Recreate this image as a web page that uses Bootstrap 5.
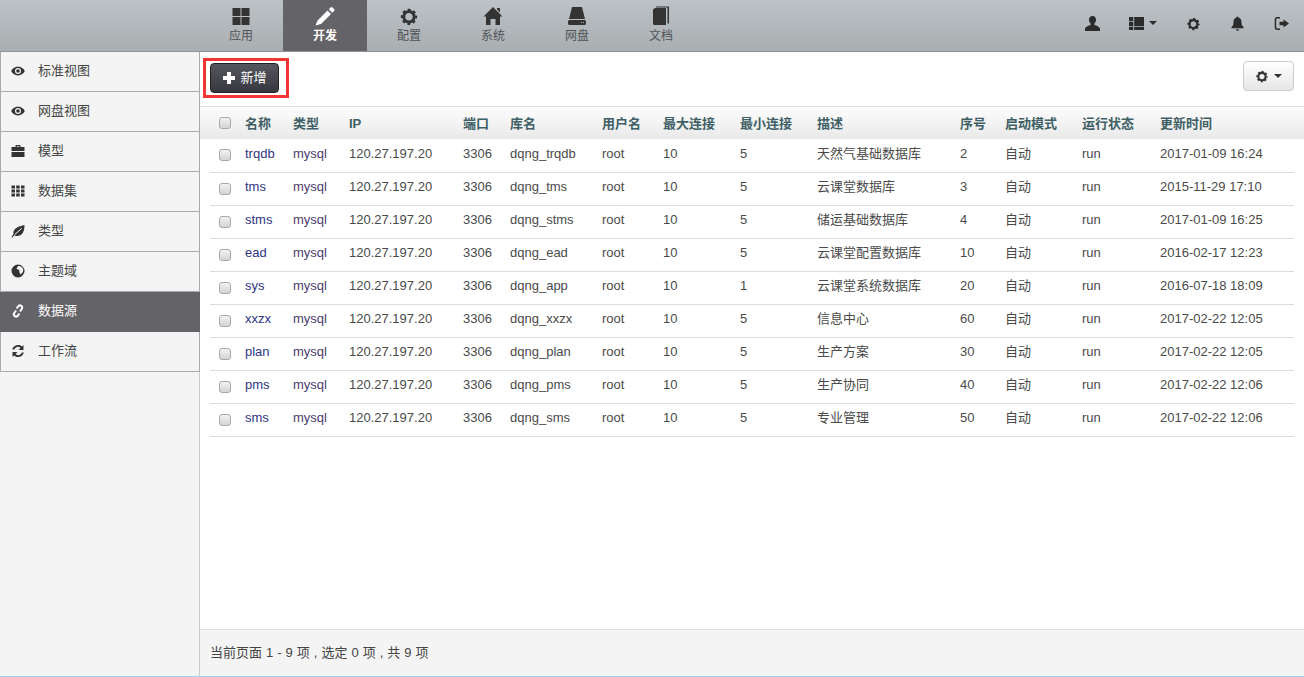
<!DOCTYPE html>
<html lang="en">
<head>
  <meta charset="UTF-8" />
  <title>数据源</title>
  <link href="https://cdn.jsdelivr.net/npm/bootstrap@5.3.2/dist/css/bootstrap.min.css" rel="stylesheet">
  <style>
    html, body { height: 100%; }
    body {
      font-family: "Liberation Sans", "Noto Sans CJK SC", sans-serif;
      font-size: 13px;
      color: #333;
      background: #fff;
      overflow: hidden;
    }
    .page { height: 677px; }
    .ico { width: 14px; height: 14px; fill: currentColor; flex: none; }

    /* top bar */
    .topbar {
      height: 52px;
      padding-left: 199px;
      background: linear-gradient(#bcc2c6, #a9aeb1);
      border-bottom: 1px solid #8f9295;
    }
    .app-tab {
      width: 84px;
      height: 51px;
      color: #505356;
      font-size: 12px;
      line-height: 14px;
      text-decoration: none;
      padding-top: 6px;
    }
    .app-tab .ico { width: 20px; height: 20px; color: #333; margin-bottom: 3px; }
    .app-tab.on { background: #646367; color: #fff; font-weight: bold; }
    .app-tab.on .ico { color: #fff; }
    .tool-set { gap: 29px; padding: 0 15px 5px 0; color: #2b2b2b; }
    .tool-set .ico { width: 15px; height: 15px; }
    .caret-down {
      border-top: 4px solid currentColor;
      border-left: 4px solid transparent;
      border-right: 4px solid transparent;
      width: 0; height: 0;
      margin-left: 5px;
    }

    /* side menu */
    .sidemenu {
      width: 200px;
      background: #f4f4f4;
      box-shadow: inset -1px 0 #ccc;
    }
    .side-item {
      height: 40px;
      padding: 0 0 1px 10px;
      color: #444;
      text-decoration: none;
      background: #f4f4f4;
      border-left: 1px solid #aaa;
      border-right: 1px solid #aaa;
      border-bottom: 1px solid #aaa;
      gap: 13px;
    }
    .side-item .ico { color: #333; }
    .side-item.on { background: #646367; color: #fff; border-color: #646367; }
    .side-item.on .ico { color: #fff; }

    /* toolbar */
    .toolrow { height: 54px; padding: 6px 10px 0; }
    .mark-box { border: 3px solid #f33434; padding: 2px 7px 2px 4px; margin-left: -7px; height: 40px; }
    .btn-add {
      width: 69px; height: 30px;
      padding: 0;
      font-size: 13px;
      color: #fff;
      border: 1px solid #222;
      border-radius: 4px;
      background: linear-gradient(#56565e, #37373f);
      gap: 4px;
    }
    .btn-add:hover { color: #fff; }
    .btn-tool {
      width: 51px; height: 30px;
      margin-top: 3px;
      padding: 0;
      color: #333;
      border: 1px solid #ccc;
      border-radius: 4px;
      background: linear-gradient(#fff, #e6e6e6);
    }

    /* table */
    .grid-wrap {
      padding: 0 10px;
      border-top: 1px solid #ddd;
      background: linear-gradient(#fdfdfd, #e9e9e9) top / 100% 32px no-repeat;
    }
    .data-grid { table-layout: fixed; width: 1084px; margin: 0; color: #4a4a4a; --bs-table-bg: transparent; }
    .data-grid th, .data-grid td {
      padding: 0 0 3px;
      border-bottom: 1px solid #ddd;
      vertical-align: middle;
      white-space: nowrap;
      box-shadow: none;
    }
    .data-grid th { height: 32px; padding: 1px 0 0; color: #3f5f66; font-weight: bold; border-bottom: 0; }
    .data-grid td { height: 33px; }
    .data-grid th:nth-child(1) { width: 35px; padding: 0 0 0 9px; }
    .data-grid td:nth-child(1) { padding: 0 0 0 9px; }
    .data-grid th:nth-child(2) { width: 48px; }
    .data-grid th:nth-child(3) { width: 56px; }
    .data-grid th:nth-child(4) { width: 114px; }
    .data-grid th:nth-child(5) { width: 47px; }
    .data-grid th:nth-child(6) { width: 92px; }
    .data-grid th:nth-child(7) { width: 61px; }
    .data-grid th:nth-child(8) { width: 77px; }
    .data-grid th:nth-child(9) { width: 77px; }
    .data-grid th:nth-child(10) { width: 143px; }
    .data-grid th:nth-child(11) { width: 45px; }
    .data-grid th:nth-child(12) { width: 77px; }
    .data-grid th:nth-child(13) { width: 78px; }
    .data-grid a { color: #2f3583; text-decoration: none; }
    .data-grid .db-type { color: #4c3b6e; }
    .chk {
      display: block;
      width: 12px; height: 12px;
      margin: 0;
      appearance: none;
      border: 1px solid #a9a9a9;
      border-radius: 3px;
      background: linear-gradient(#f2f2f2, #d4d4d4);
    }

    /* footer */
    .grid-foot {
      height: 47px;
      padding-left: 10px;
      background: #f4f4f4;
      border-top: 1px solid #ddd;
      color: #444;
      word-spacing: .4px;
    }
    .bottom-line { height: 1px; background: #9dd3f2; }
  </style>
</head>
<body>

  <!-- ICONS -->
  <svg width="0" height="0" class="position-absolute">
    <symbol id="i-th" viewBox="0 0 20 20"><path d="M1.500 2h8v8h-8zM10.500 2h8v8h-8zM1.500 11h8v8h-8zM10.500 11h8v8h-8z"/></symbol>
    <symbol id="i-pencil" viewBox="0 0 20 20"><path d="M12.500 4.500L16 8 6 18l-5.500 1.500L2.500 14.500zM13.800 3.200L15.500 1.500a1.400 1.400 0 0 1 2 0l1.500 1.500a1.400 1.400 0 0 1 0 2L17.300 6.700z"/></symbol>
    <symbol id="i-cog" viewBox="-2 -3 24 24"><circle cx="10" cy="10" r="6.300" fill="none" stroke="currentColor" stroke-width="3.600"/><circle cx="10" cy="10" r="8.300" fill="none" stroke="currentColor" stroke-width="3" stroke-dasharray="3.400 3.118" stroke-dashoffset="1.700"/></symbol>
    <symbol id="i-home" viewBox="0 0 20 20"><path d="M10 1l9.500 9.500H17V19h-4.500v-6h-5v6H3v-8.500H.5zM14 2h3v4.500l-3-3z"/></symbol>
    <symbol id="i-hdd" viewBox="0 0 20 20"><path fill-rule="evenodd" d="M5 1h10l3 12H2zM2.500 14h15a1.500 1.500 0 0 1 1.500 1.500v2a1.500 1.500 0 0 1-1.500 1.500h-15A1.500 1.500 0 0 1 1 17.500v-2A1.500 1.500 0 0 1 2.500 14zM14 16v1h1v-1zm2 0v1h1v-1z"/></symbol>
    <symbol id="i-book" viewBox="0 0 20 20"><path d="M2 3.500L4 2h11v17H3.500A1.500 1.500 0 0 1 2 17.500zM5 .5h13v17h-1.500V1.500H5z"/></symbol>
    <symbol id="i-user" viewBox="0 0 15 15"><path d="M7.500 0c2.200 0 3.500 1.700 3.500 3.800 0 1.500-.7 3-1.600 3.800V9c2 .8 5.600 1.600 5.600 4v2H0v-2c0-2.400 3.600-3.200 5.600-4V7.600C4.700 6.800 4 5.300 4 3.800 4 1.700 5.300 0 7.500 0z"/></symbol>
    <symbol id="i-layout" viewBox="0 0 15 15"><path d="M0 1h4.300v4H0zM0 5.800h4.300V10H0zM0 10.800h4.300V14H0zM5.200 1H15v9H5.200zM5.200 10.800H15V14H5.200z"/></symbol>
    <symbol id="i-bell" viewBox="0 0 15 15"><path d="M7.500 .5a1 1 0 0 1 1 1c2.300.5 3 2.400 3 5 0 2.500 1 3.700 2 4.500v1.300h-12V11c1-.8 2-2 2-4.500 0-2.600.7-4.500 3-5a1 1 0 0 1 1-1zM6 13.200h3a1.500 1.500 0 0 1-3 0z"/></symbol>
    <symbol id="i-out" viewBox="0 0 15 15"><path d="M6 1v1.400H3.500A1.300 1.300 0 0 0 2.200 3.700v7.600a1.300 1.300 0 0 0 1.300 1.300H6V14H3.300A2.700 2.700 0 0 1 .700 11.300V3.700A2.700 2.700 0 0 1 3.300 1zM9.500 3.500L15 7.500l-5.500 4V9.300h-4V5.700h4z"/></symbol>
    <symbol id="i-eye" viewBox="0 0 14 14"><path fill-rule="evenodd" d="M7 2.500c3.300 0 5.700 2.300 6.800 4.500C12.700 9.200 10.300 11.500 7 11.500S1.300 9.200.2 7C1.300 4.800 3.700 2.500 7 2.500zM7 4a3 3 0 1 0 0 6 3 3 0 0 0 0-6zm0 1.200a1.800 1.800 0 1 1 0 3.600 1.800 1.800 0 0 1 0-3.600z"/></symbol>
    <symbol id="i-case" viewBox="0 0 14 14"><path fill-rule="evenodd" d="M4.500 3V1.800c0-.5.300-.8.800-.8h3.400c.5 0 .8.300.8.800V3H13.500v4H.5V3zm1.300-.7V3h2.400v-.7zM.5 8h13v5H.5z"/></symbol>
    <symbol id="i-grid" viewBox="0 0 14 14"><path d="M.5 1.500h3.500v3H.5zM5.200 1.500h3.500v3H5.200zM10 1.500h3.500v3H10zM.5 5.500h3.500v3H.5zM5.200 5.500h3.500v3H5.200zM10 5.500h3.500v3H10zM.5 9.500h3.500v3H.5zM5.200 9.500h3.500v3H5.200zM10 9.500h3.500v3H10z"/></symbol>
    <symbol id="i-leaf" viewBox="0 0 14 14"><path fill-rule="evenodd" d="M13.500 1C13.500 8 11 12 6 12c-1.200 0-2.200-.3-2.800-.8L1.500 13.500l-1-.5 2-3C1.800 6 5 2.500 13.500 1zM10.500 4L3.500 10.300l.7.500L11 4.500z"/></symbol>
    <symbol id="i-globe" viewBox="0 0 14 14"><path fill-rule="evenodd" d="M7 .5a6.500 6.500 0 1 1 0 13 6.500 6.500 0 0 1 0-13zM7 2c-.7.700-.5 1.500-1.300 2-.5.800.5 1.300 1.300 1.500.8 0 1.500.6 1.300 1.500-.2 1 .6 1.500 1 3.500 1.500-.5 3-2.500 3-4.500 0-2-2-4.700-5.300-4z"/></symbol>
    <symbol id="i-link" viewBox="0 0 14 14"><path fill="none" stroke="currentColor" stroke-width="2" d="M5.500 4.500L7.500 2a2.200 2.200 0 0 1 3.500 2.500L9 7.500M8.500 9.500L6.500 12A2.200 2.200 0 0 1 3 9.500L5 6.500"/></symbol>
    <symbol id="i-sync" viewBox="0 0 14 14"><path d="M12.500 1v5H7.500l2-2a3.800 3.800 0 0 0-6.300 1.500H1.200A6 6 0 0 1 11 2.500zM1.500 13V8h5l-2 2a3.800 3.800 0 0 0 6.300-1.500h2A6 6 0 0 1 3 11.500z"/></symbol>
    <symbol id="i-plus" viewBox="0 0 14 14"><path d="M5 1h4v4h4v4H9v4H5V9H1V5h4z"/></symbol>
  </svg>

  <div class="page d-flex flex-column">

    <!-- TOP BAR -->
    <nav class="topbar d-flex flex-shrink-0">
      <a href="#" class="app-tab d-flex flex-column align-items-center"><svg class="ico"><use href="#i-th"/></svg>应用</a>
      <a href="#" class="app-tab on d-flex flex-column align-items-center"><svg class="ico"><use href="#i-pencil"/></svg>开发</a>
      <a href="#" class="app-tab d-flex flex-column align-items-center"><svg class="ico"><use href="#i-cog"/></svg>配置</a>
      <a href="#" class="app-tab d-flex flex-column align-items-center"><svg class="ico"><use href="#i-home"/></svg>系统</a>
      <a href="#" class="app-tab d-flex flex-column align-items-center"><svg class="ico"><use href="#i-hdd"/></svg>网盘</a>
      <a href="#" class="app-tab d-flex flex-column align-items-center"><svg class="ico"><use href="#i-book"/></svg>文档</a>
      <div class="tool-set ms-auto d-flex align-items-center">
        <svg class="ico"><use href="#i-user"/></svg>
        <span class="d-flex align-items-center"><svg class="ico"><use href="#i-layout"/></svg><i class="caret-down"></i></span>
        <svg class="ico"><use href="#i-cog"/></svg>
        <svg class="ico"><use href="#i-bell"/></svg>
        <svg class="ico"><use href="#i-out"/></svg>
      </div>
    </nav>

    <div class="d-flex flex-grow-1 overflow-hidden">

      <!-- SIDE MENU -->
      <aside class="sidemenu d-flex flex-column flex-shrink-0">
        <a href="#" class="side-item d-flex align-items-center"><svg class="ico"><use href="#i-eye"/></svg>标准视图</a>
        <a href="#" class="side-item d-flex align-items-center"><svg class="ico"><use href="#i-eye"/></svg>网盘视图</a>
        <a href="#" class="side-item d-flex align-items-center"><svg class="ico"><use href="#i-case"/></svg>模型</a>
        <a href="#" class="side-item d-flex align-items-center"><svg class="ico"><use href="#i-grid"/></svg>数据集</a>
        <a href="#" class="side-item d-flex align-items-center"><svg class="ico"><use href="#i-leaf"/></svg>类型</a>
        <a href="#" class="side-item d-flex align-items-center"><svg class="ico"><use href="#i-globe"/></svg>主题域</a>
        <a href="#" class="side-item on d-flex align-items-center"><svg class="ico"><use href="#i-link"/></svg>数据源</a>
        <a href="#" class="side-item d-flex align-items-center"><svg class="ico"><use href="#i-sync"/></svg>工作流</a>
      </aside>

      <!-- MAIN -->
      <main class="flex-grow-1 d-flex flex-column">
        <div class="toolrow d-flex align-items-start justify-content-between flex-shrink-0">
          <div class="mark-box d-flex align-items-center">
            <button class="btn btn-add d-flex align-items-center justify-content-center"><svg class="ico"><use href="#i-plus"/></svg>新增</button>
          </div>
          <button class="btn btn-tool d-flex align-items-center justify-content-center"><svg class="ico"><use href="#i-cog"/></svg><i class="caret-down"></i></button>
        </div>

        <div class="grid-wrap flex-grow-1">
          <table class="table data-grid">
            <thead>
              <tr><th><input type="checkbox" class="chk"></th><th>名称</th><th>类型</th><th>IP</th><th>端口</th><th>库名</th><th>用户名</th><th>最大连接</th><th>最小连接</th><th>描述</th><th>序号</th><th>启动模式</th><th>运行状态</th><th>更新时间</th></tr>
            </thead>
            <tbody id="rows"></tbody>
          </table>
        </div>

        <div class="grid-foot d-flex align-items-center flex-shrink-0">当前页面 1 - 9 项 , 选定 0 项 , 共 9 项</div>
      </main>
    </div>
    <div class="bottom-line flex-shrink-0"></div>
  </div>

  <script src="https://cdn.jsdelivr.net/npm/bootstrap@5.3.2/dist/js/bootstrap.bundle.min.js"></script>
  <script>
    const sources = [
      ["trqdb", "dqng_trqdb", 5, "天然气基础数据库", 2, "2017-01-09 16:24"],
      ["tms", "dqng_tms", 5, "云课堂数据库", 3, "2015-11-29 17:10"],
      ["stms", "dqng_stms", 5, "储运基础数据库", 4, "2017-01-09 16:25"],
      ["ead", "dqng_ead", 5, "云课堂配置数据库", 10, "2016-02-17 12:23"],
      ["sys", "dqng_app", 1, "云课堂系统数据库", 20, "2016-07-18 18:09"],
      ["xxzx", "dqng_xxzx", 5, "信息中心", 60, "2017-02-22 12:05"],
      ["plan", "dqng_plan", 5, "生产方案", 30, "2017-02-22 12:05"],
      ["pms", "dqng_pms", 5, "生产协同", 40, "2017-02-22 12:06"],
      ["sms", "dqng_sms", 5, "专业管理", 50, "2017-02-22 12:06"]
    ];
    document.getElementById("rows").innerHTML = sources.map(s => `
      <tr>
        <td><input type="checkbox" class="chk"></td>
        <td><a href="#">${s[0]}</a></td>
        <td class="db-type">mysql</td>
        <td>120.27.197.20</td>
        <td>3306</td>
        <td>${s[1]}</td>
        <td>root</td>
        <td>10</td>
        <td>${s[2]}</td>
        <td>${s[3]}</td>
        <td>${s[4]}</td>
        <td>自动</td>
        <td>run</td>
        <td>${s[5]}</td>
      </tr>`).join("");
  </script>
</body>
</html>
